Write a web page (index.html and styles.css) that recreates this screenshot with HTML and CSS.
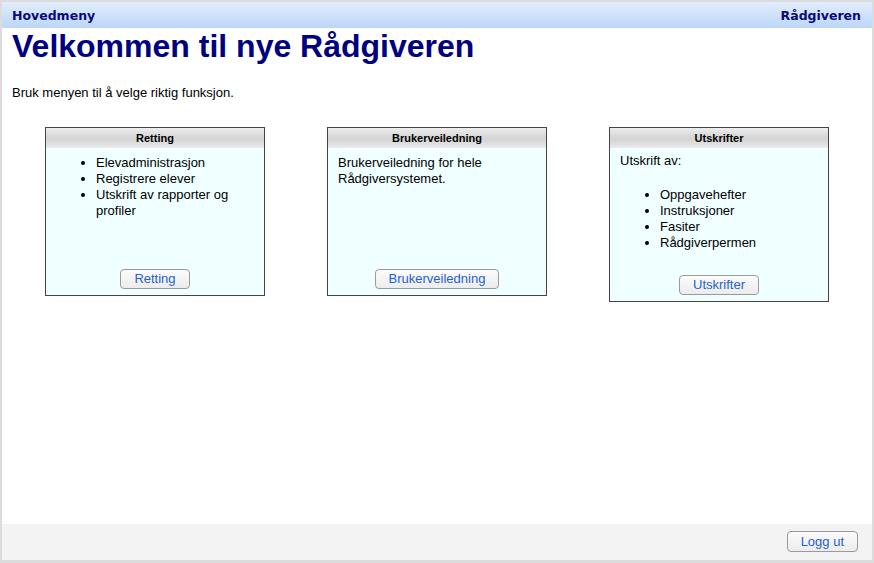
FILE: index.html
```html
<!DOCTYPE html>
<html lang="no">
<head>
<meta charset="utf-8">
<title>Rådgiveren</title>
<link rel="stylesheet" href="styles.css">
</head>
<body>
<div class="frame">
  <div class="topbar">
    <span class="topbar-title">Hovedmeny</span>
    <span class="topbar-title">Rådgiveren</span>
  </div>
  <main class="main">
    <h1 class="title">Velkommen til nye Rådgiveren</h1>
    <p class="intro">Bruk menyen til å velge riktig funksjon.</p>
    <div class="cards">
      <section class="card">
        <div class="card-head">Retting</div>
        <div class="card-body">
          <ul class="list">
            <li>Elevadministrasjon</li>
            <li>Registrere elever</li>
            <li>Utskrift av rapporter og profiler</li>
          </ul>
          <div class="card-actions"><button class="btn">Retting</button></div>
        </div>
      </section>
      <section class="card">
        <div class="card-head">Brukerveiledning</div>
        <div class="card-body">
          <p class="text">Brukerveiledning for hele Rådgiversystemet.</p>
          <div class="card-actions"><button class="btn">Brukerveiledning</button></div>
        </div>
      </section>
      <section class="card">
        <div class="card-head">Utskrifter</div>
        <div class="card-body">
          <p class="text text-tight">Utskrift av:</p>
          <ul class="list list-spaced">
            <li>Oppgavehefter</li>
            <li>Instruksjoner</li>
            <li>Fasiter</li>
            <li>Rådgiverpermen</li>
          </ul>
          <div class="card-actions"><button class="btn">Utskrifter</button></div>
        </div>
      </section>
    </div>
  </main>
  <footer class="footer">
    <button class="btn">Logg ut</button>
  </footer>
</div>
</body>
</html>
```
FILE: styles.css
```css
* { box-sizing: border-box; }
html, body { margin: 0; padding: 0; }
body {
  font-family: "Liberation Sans", Arial, sans-serif;
  font-size: 13px;
  color: #000;
  background: #dcdcdc;
}
.frame {
  width: 874px;
  height: 563px;
  border: 2px solid #dcdcdc;
  border-bottom-width: 3px;
  display: flex;
  flex-direction: column;
  background: #fff;
}
.topbar {
  height: 26px;
  flex: none;
  display: flex;
  align-items: center;
  justify-content: space-between;
  padding: 0 11px 0 10px;
  background: linear-gradient(#e2edfc 0%, #d0e3fb 45%, #bcd6f8 100%);
}
.topbar-title {
  font-family: "DejaVu Sans", Verdana, sans-serif;
  font-weight: bold;
  font-size: 12.5px;
  color: #0a0a78;
}
.main {
  flex: 1;
  padding: 0 0 0 10px;
}
.title {
  margin: 0;
  font-size: 32px;
  line-height: 37px;
  font-weight: bold;
  color: #000080;
}
.intro {
  margin: 20px 0 0;
  line-height: 15px;
}
.cards {
  display: flex;
  align-items: flex-start;
  gap: 62px;
  margin-top: 27px;
  padding-left: 33px;
}
.card {
  width: 220px;
  border: 1px solid #444;
  background: #f0ffff;
  display: flex;
  flex-direction: column;
}
.card-head {
  height: 20px;
  line-height: 20px;
  text-align: center;
  font-weight: bold;
  font-size: 11px;
  background: linear-gradient(#eeeeee 0%, #d8d8d8 40%, #d5d5d5 60%, #ebebeb 100%);
}
.card-body {
  min-height: 147px;
  display: flex;
  flex-direction: column;
  padding: 7px 10px 6px;
  line-height: 16px;
}
.list {
  margin: 0;
  padding-left: 40px;
}
.list-spaced {
  margin-top: 18px;
}
.text { margin: 0; }
.text-tight { margin-top: -2px; }
.card-actions {
  margin-top: auto;
  padding-top: 24px;
  text-align: center;
}
.btn {
  font-family: "Liberation Sans", Arial, sans-serif;
  font-size: 13px;
  height: 20px;
  line-height: 18px;
  padding: 0 13px;
  color: #1f5fd4;
  border: 1px solid #9a9a9a;
  border-radius: 4px;
  background: linear-gradient(#fbfbfb, #ececec);
}
.footer {
  height: 36px;
  flex: none;
  background: #f3f3f3;
  display: flex;
  justify-content: flex-end;
  align-items: center;
  padding: 0 14px 1px 0;
}
.footer .btn {
  height: 21px;
}
```
